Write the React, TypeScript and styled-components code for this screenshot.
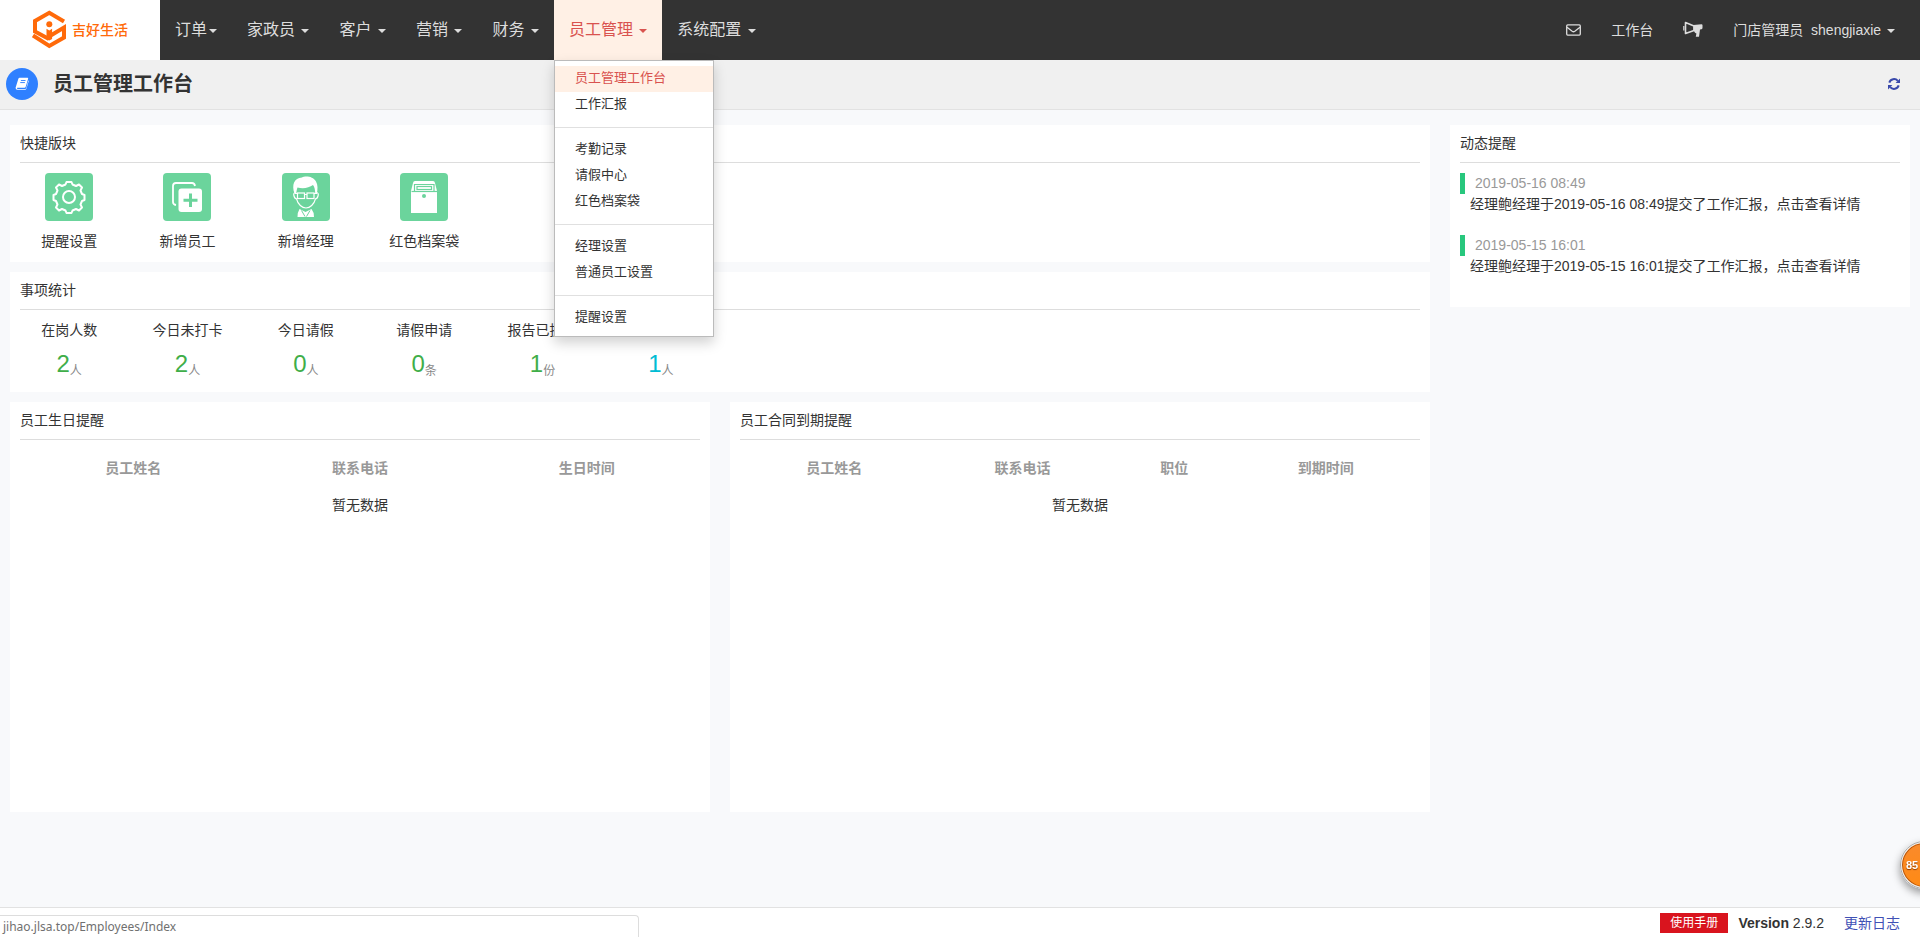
import React from 'react';
import styled, { createGlobalStyle, css } from 'styled-components';

const GlobalStyle = createGlobalStyle`
  *, *::before, *::after { box-sizing: border-box; }
  body {
    margin: 0;
    background: #f8f9fb;
    color: #333;
    font-family: "Liberation Sans", Arial, "Noto Sans CJK SC", sans-serif;
    font-size: 14px;
    line-height: 20px;
    overflow-x: hidden;
  }
  a { text-decoration: none; color: inherit; }
  ul { list-style: none; margin: 0; padding: 0; }
  h1, h2, p { margin: 0; font-weight: 400; }
  svg { display: block; }
`;

const Page = styled.div`
  min-height: 100vh;
  display: flex;
  flex-direction: column;
`;

/* ---------- top bar ---------- */

const Header = styled.header`
  display: flex;
  height: 60px;
  background: #333;
  color: #ddd;
`;

const Brand = styled.a`
  display: flex;
  align-items: center;
  gap: 6px;
  width: 160px;
  padding-left: 32px;
  background: #fff;
  color: #ff6a0a;
  font-weight: 500;
`;

const NavList = styled.ul`
  display: flex;
`;

const NavItem = styled.li`
  position: relative;
`;

const NavButton = styled.button<{ $active?: boolean }>`
  height: 60px;
  padding: 0 15px;
  border: 0;
  font: inherit;
  font-size: 16px;
  white-space: nowrap;
  cursor: pointer;
  background: ${(p) => (p.$active ? '#fff0e5' : 'transparent')};
  color: ${(p) => (p.$active ? '#d9534f' : '#ddd')};
`;

const Caret = styled.span`
  display: inline-block;
  margin-left: 2px;
  vertical-align: middle;
  border-top: 4px solid currentColor;
  border-left: 4px solid transparent;
  border-right: 4px solid transparent;
`;

const Menu = styled.div`
  position: absolute;
  top: 60px;
  left: 0;
  z-index: 10;
  width: 160px;
  padding: 5px 0;
  background: #fff;
  border: 1px solid #bbb;
  box-shadow: 0 6px 12px rgba(0, 0, 0, 0.18);
`;

const MenuGroup = styled.ul`
  & + & {
    margin-top: 9px;
    padding-top: 9px;
    border-top: 1px solid #e0e0e0;
  }
`;

const MenuLink = styled.a<{ $active?: boolean }>`
  display: block;
  padding: 2px 20px 4px;
  font-size: 13px;
  line-height: 20px;
  color: #333;
  ${(p) => p.$active && css`
    background: #fff0e5;
    color: #d9534f;
  `}
`;

const UserNav = styled.div`
  display: flex;
  margin-left: auto;
  padding-right: 10px;
`;

const UserButton = styled.button`
  padding: 0 15px;
  border: 0;
  background: transparent;
  color: #ddd;
  font: inherit;
  white-space: nowrap;
  cursor: pointer;
`;

const RoleName = styled.span`
  margin-right: 4px;
`;

/* ---------- page title ---------- */

const TitleBar = styled.div`
  display: flex;
  align-items: center;
  gap: 15px;
  height: 50px;
  padding: 0 20px 2px 6px;
  background: #f0f0f0;
  border-bottom: 1px solid #e2e2e2;
`;

const TitleBadge = styled.span`
  display: flex;
  align-items: center;
  justify-content: center;
  width: 32px;
  height: 32px;
  border-radius: 50%;
  background: #2f80ff;
`;

const Title = styled.h1`
  font-size: 20px;
  line-height: 28px;
  font-weight: 700;
`;

const RefreshButton = styled.button`
  margin-left: auto;
  padding: 0;
  border: 0;
  background: transparent;
  cursor: pointer;
`;

/* ---------- content ---------- */

const Content = styled.main`
  flex: 1;
  display: grid;
  grid-template-columns: 3fr 1fr;
  align-items: start;
  padding: 15px 0;
`;

const Column = styled.div`
  display: flex;
  flex-direction: column;
  gap: 10px;
  padding: 0 10px;
`;

const Panel = styled.section<{ $minHeight?: number }>`
  min-height: ${(p) => p.$minHeight ?? 0}px;
  padding-bottom: 10px;
  background: #fff;
`;

const PanelTitle = styled.h2`
  margin: 0 10px;
  padding: 8px 0 9px;
  border-bottom: 1px solid #ddd;
  font-size: 14px;
  line-height: 20px;
`;

const PairRow = styled.div`
  display: grid;
  grid-template-columns: 1fr 1fr;
  gap: 20px;
`;

const TileGrid = styled.div`
  display: grid;
  grid-template-columns: repeat(12, 1fr);
  padding-top: 10px;
`;

const Shortcut = styled.a`
  display: flex;
  flex-direction: column;
  align-items: center;
  gap: 10px;
  height: 79px;
  white-space: nowrap;
`;

const ShortcutIcon = styled.span`
  width: 48px;
  height: 48px;
  border-radius: 4px;
  background: #6bd49c;
`;

const Stat = styled.div`
  display: flex;
  flex-direction: column;
  align-items: center;
  height: 62px;
  white-space: nowrap;
`;

const StatLabel = styled.span`
  height: 20px;
`;

const StatValue = styled.a<{ $color: string }>`
  display: flex;
  align-items: flex-end;
  margin-top: 10px;
  font-size: 24px;
  line-height: 28px;
  color: ${(p) => p.$color};
`;

const StatUnit = styled.span`
  font-size: 12px;
  line-height: 14px;
  color: #888;
`;

const DataTable = styled.table`
  width: calc(100% - 20px);
  margin: 10px 10px 0;
  border-collapse: collapse;
  table-layout: fixed;
  text-align: center;

  th, td { padding: 8px 0; }
  th { color: #999; font-weight: 700; padding-bottom: 9px; }
`;

const NoticeList = styled.ul`
  padding-bottom: 10px;
`;

const Notice = styled.li`
  margin-top: 10px;
  padding: 0 10px;
  height: 52px;
`;

const NoticeTime = styled.time`
  display: block;
  height: 21px;
  padding-left: 10px;
  border-left: 5px solid #28c77d;
  color: #999;
`;

const NoticeLink = styled.a`
  display: block;
  padding-left: 10px;
  line-height: 20px;
`;

/* ---------- footer ---------- */

const Footer = styled.footer`
  display: flex;
  justify-content: flex-end;
  align-items: center;
  height: 30px;
  padding: 0 20px 0 0;
  background: #fff;
  border-top: 1px solid #e2e2e2;
`;

const ManualButton = styled.a`
  margin-right: 10px;
  padding: 0 10px;
  background: #d9141e;
  color: #fff;
  font-size: 12px;
  line-height: 20px;
`;

const LogLink = styled.a`
  margin-left: 20px;
  color: #3f51b5;
`;

const LinkPreview = styled.div`
  position: fixed;
  left: 0;
  bottom: 0;
  width: 639px;
  max-width: 100%;
  height: 22px;
  padding-left: 3px;
  background: #fff;
  border: solid #ddd;
  border-width: 1px 1px 0 0;
  border-top-right-radius: 4px;
  color: #707070;
  font: 12px/21px "Noto Sans", "Open Sans", sans-serif;
`;

const SpeedBall = styled.button`
  position: fixed;
  right: -28px;
  bottom: 48px;
  width: 48px;
  height: 48px;
  padding: 0 0 0 4px;
  border: 2px solid #eee;
  border-radius: 50%;
  outline: 1px solid #aaa;
  outline-offset: -1px;
  background: linear-gradient(#f98a2c, #ff8a14);
  box-shadow: 0 4px 8px rgba(0, 0, 0, 0.4), inset 0 0 0 1px #b8560c;
  color: #fff;
  font: 700 11px/14px "Liberation Sans", Arial, sans-serif;
  text-align: left;
  text-shadow: 0 1px 1px #8a3c00;
`;

/* ---------- drawings ---------- */

const LogoMark = () => (
  <svg width="34" height="40" viewBox="0 0 34 40" fill="none" stroke="#ff6a0a" strokeWidth="4" aria-hidden="true">
    <path d="M32 11.5 17.3 2.8 3 11v10.500l14 7.500" />
    <path d="M1 25.500 17.300 36 32 27.500V17.500L17 26.500" />
    <circle cx="17.300" cy="14.300" r="3" fill="#ff6a0a" stroke="none" />
    <path d="M14.500 18.800l2.800 1.700 2.800-1.700V29l-2.800 1.500-2.800-1.500z" fill="#ff6a0a" stroke="none" />
  </svg>
);

const EnvelopeIcon = () => (
  <svg width="15" height="12" viewBox="0 0 15 12" fill="none" stroke="currentColor" strokeWidth="1.3" aria-hidden="true">
    <rect x=".7" y=".9" width="13.6" height="10.2" rx="1" />
    <path d="M1 3.2l5.2 4.1q1.3.9 2.6 0L14 3.2" />
  </svg>
);

const HornIcon = () => (
  <svg width="20" height="18" viewBox="0 0 20 18" fill="none" stroke="currentColor" aria-hidden="true">
    <path d="M2.500 1.500 11 5v4.500L2.500 12.500z" strokeWidth="1.600" strokeLinejoin="round" />
    <path d="M10.500 4l8-.8q1 0 1 1v2.600q0 1.200-1 1.400l-1.500.4-1 7.200h-3.200l.6-3.300-1.400-.7-1.500-2.500z" fill="currentColor" stroke="none" />
    <path d="M.8 5v4.500" strokeWidth="1.200" />
  </svg>
);

const BookIcon = () => (
  <svg width="14" height="13" viewBox="0 0 15 14" aria-hidden="true">
    <path d="M5 .8h8.4q1 .1.7 1.2l-2.6 8.6q-.3 1-1.3 1H2.6q-.8 0-.6.6.2.7 1 .7h8q.8 0 1-.8L14.400 3.500q.5.5.3 1.200l-2.500 8q-.3 1-1.300 1H2.500Q.5 13.500.6 11.500L3.600 2Q4 .8 5 .8z" fill="#fff" />
    <path d="M6.300 3.800h5M5.600 6h5" stroke="#2f80ff" strokeWidth="1" />
  </svg>
);

const RefreshIcon = () => (
  <svg width="12" height="12" viewBox="0 0 12 12" aria-hidden="true">
    <g fill="none" stroke="#3949ab" strokeWidth="2">
      <path d="M1.300 4.600A5 5 0 0 1 9.800 2.800" />
      <path d="M10.700 7.400A5 5 0 0 1 2.200 9.200" />
    </g>
    <path d="M12 .6v4.400H7.600zM0 11.400V7h4.400z" fill="#3949ab" />
  </svg>
);

const GearIcon = () => (
  <svg width="48" height="48" viewBox="0 0 48 48" fill="none" stroke="#fff" strokeWidth="2" strokeLinejoin="round" aria-hidden="true">
    <path d="M20.500 11.500l1-2.500h5l1 2.500 3.500 1.500 3-1.500 3 3-1.500 3 1.500 3.500 2.500 1v5l-2.500 1-1.500 3.500 1.500 3-3 3-3-1.500-3.500 1.500-1 2.500h-5l-1-2.500-3.500-1.500-3 1.500-3-3 1.500-3-1.500-3.500-2.500-1v-5l2.500-1 1.500-3.500-1.500-3 3-3 3 1.500z" />
    <circle cx="24" cy="24" r="6" />
  </svg>
);

const AddIcon = () => (
  <svg width="48" height="48" viewBox="0 0 48 48" aria-hidden="true">
    <path d="M13 32q-3-.5-3-3V13q0-3 3-3h16q2.500 0 3 3" fill="none" stroke="#fff" strokeWidth="1.800" />
    <rect x="15.500" y="15.500" width="23.500" height="23.500" rx="3" fill="#fff" />
    <path d="M27.500 20.500v13.500M20.500 27.200h14" stroke="#6bd49c" strokeWidth="3" />
  </svg>
);

const ManagerIcon = () => (
  <svg width="48" height="48" viewBox="0 0 48 48" aria-hidden="true">
    <path d="M12.500 20.500C9.500 12 12 5 20 4.500c3-1.800 11-1.500 14 4 2 3.500 1.800 8 .8 12l-1.600-.5c-.2-3-.4-6-2.200-8-4 3-10 4-15.500 2.500-.8 1.800-1 4-1.200 6z" fill="#fff" />
    <g fill="none" stroke="#fff" strokeWidth="1.200">
      <path d="M13.500 19.500q-2.500.5-1.500 3.500.8 2.800 2.500 2.800C16 31.500 20 35 24 35s8-3.500 9.500-9.200q1.700 0 2.500-2.800 1-3-1.500-3.500" />
      <rect x="15.500" y="20" width="7" height="5.500" />
      <rect x="25" y="20" width="7" height="5.500" />
      <path d="M22.500 21.500H25M13 20.500h2.500M32 20.500h3" />
    </g>
    <path d="M17.500 36l6 3 6-3q2.500 3 2.500 8H15.500q0-5 2-8z" fill="#fff" />
    <path d="M19.500 37.500l3.500 6M28 37.500l-3.500 6" stroke="#6bd49c" strokeWidth="1" />
  </svg>
);

const ArchiveIcon = () => (
  <svg width="48" height="48" viewBox="0 0 48 48" aria-hidden="true">
    <path d="M11 40V18l2-8q.3-2 2-2h18q1.700 0 2 2l2 8v22z" fill="#fff" />
    <path d="M11.500 18.500h25.500" stroke="#6bd49c" strokeWidth="1.200" />
    <path d="M14.500 18v-6.500h19.500V18" fill="none" stroke="#6bd49c" strokeWidth="1.200" />
    <rect x="17" y="13.500" width="14.500" height="3" fill="none" stroke="#6bd49c" strokeWidth="1.200" />
    <circle cx="24" cy="23" r="2" fill="#6bd49c" />
  </svg>
);

/* ---------- data ---------- */

const navItems = ['订单', '家政员', '客户', '营销', '财务', '员工管理', '系统配置'];

const menuGroups = [
  ['员工管理工作台', '工作汇报'],
  ['考勤记录', '请假中心', '红色档案袋'],
  ['经理设置', '普通员工设置'],
  ['提醒设置'],
];

const shortcuts = [
  { label: '提醒设置', Icon: GearIcon },
  { label: '新增员工', Icon: AddIcon },
  { label: '新增经理', Icon: ManagerIcon },
  { label: '红色档案袋', Icon: ArchiveIcon },
];

const stats = [
  { label: '在岗人数', value: 2, unit: '人' },
  { label: '今日未打卡', value: 2, unit: '人' },
  { label: '今日请假', value: 0, unit: '人' },
  { label: '请假申请', value: 0, unit: '条' },
  { label: '报告已提交', value: 1, unit: '份' },
  { label: '', value: 1, unit: '人', color: '#00bcd4' },
];

const birthdayColumns = [
  { label: '员工姓名', width: '33.33%' },
  { label: '联系电话', width: '33.34%' },
  { label: '生日时间', width: '33.33%' },
];

const contractColumns = [
  { label: '员工姓名', width: '27.7%' },
  { label: '联系电话', width: '27.7%' },
  { label: '职位', width: '16.9%' },
  { label: '到期时间', width: '27.7%' },
];

const notices = ['2019-05-16 08:49', '2019-05-15 16:01'];

type ReminderProps = { title: string; columns: { label: string; width: string }[] };

const ReminderPanel = ({ title, columns }: ReminderProps) => (
  <Panel $minHeight={410}>
    <PanelTitle>{title}</PanelTitle>
    <DataTable>
      <colgroup>
        {columns.map((c) => <col key={c.label} width={c.width} />)}
      </colgroup>
      <thead>
        <tr>{columns.map((c) => <th key={c.label} scope="col">{c.label}</th>)}</tr>
      </thead>
      <tbody>
        <tr><td colSpan={columns.length}>暂无数据</td></tr>
      </tbody>
    </DataTable>
  </Panel>
);

export default function App() {
  return (
    <Page>
      <GlobalStyle />
      <Header>
        <Brand href="#"><LogoMark />吉好生活</Brand>
        <nav>
          <NavList>
            {navItems.map((label, i) => {
              const active = label === '员工管理';
              return (
                <NavItem key={label}>
                  <NavButton type="button" $active={active} aria-expanded={active}>
                    {label}{i > 0 && ' '}<Caret />
                  </NavButton>
                  {active && (
                    <Menu>
                      {menuGroups.map((group) => (
                        <MenuGroup key={group[0]}>
                          {group.map((item) => (
                            <li key={item}>
                              <MenuLink href="#" $active={item === '员工管理工作台'}>{item}</MenuLink>
                            </li>
                          ))}
                        </MenuGroup>
                      ))}
                    </Menu>
                  )}
                </NavItem>
              );
            })}
          </NavList>
        </nav>
        <UserNav>
          <UserButton type="button" aria-label="消息"><EnvelopeIcon /></UserButton>
          <UserButton type="button">工作台</UserButton>
          <UserButton type="button" aria-label="公告"><HornIcon /></UserButton>
          <UserButton type="button"><RoleName>门店管理员</RoleName> shengjiaxie <Caret /></UserButton>
        </UserNav>
      </Header>

      <TitleBar>
        <TitleBadge><BookIcon /></TitleBadge>
        <Title>员工管理工作台</Title>
        <RefreshButton type="button" aria-label="刷新"><RefreshIcon /></RefreshButton>
      </TitleBar>

      <Content>
        <Column>
          <Panel>
            <PanelTitle>快捷版块</PanelTitle>
            <TileGrid>
              {shortcuts.map(({ label, Icon }) => (
                <Shortcut key={label} href="#">
                  <ShortcutIcon><Icon /></ShortcutIcon>
                  {label}
                </Shortcut>
              ))}
            </TileGrid>
          </Panel>
          <Panel>
            <PanelTitle>事项统计</PanelTitle>
            <TileGrid>
              {stats.map((s, i) => (
                <Stat key={i}>
                  <StatLabel>{s.label}</StatLabel>
                  <StatValue href="#" $color={s.color ?? '#3fae49'}>
                    {s.value}<StatUnit>{s.unit}</StatUnit>
                  </StatValue>
                </Stat>
              ))}
            </TileGrid>
          </Panel>
          <PairRow>
            <ReminderPanel title="员工生日提醒" columns={birthdayColumns} />
            <ReminderPanel title="员工合同到期提醒" columns={contractColumns} />
          </PairRow>
        </Column>
        <Column>
          <Panel>
            <PanelTitle>动态提醒</PanelTitle>
            <NoticeList>
              {notices.map((time) => (
                <Notice key={time}>
                  <NoticeTime>{time}</NoticeTime>
                  <NoticeLink href="#">经理鲍经理于{time}提交了工作汇报，点击查看详情</NoticeLink>
                </Notice>
              ))}
            </NoticeList>
          </Panel>
        </Column>
      </Content>

      <Footer>
        <ManualButton href="#">使用手册</ManualButton>
        <span><b>Version</b> 2.9.2</span>
        <LogLink href="#">更新日志</LogLink>
      </Footer>
      <LinkPreview>jihao.jlsa.top/Employees/Index</LinkPreview>
      <SpeedBall type="button">85</SpeedBall>
    </Page>
  );
}
